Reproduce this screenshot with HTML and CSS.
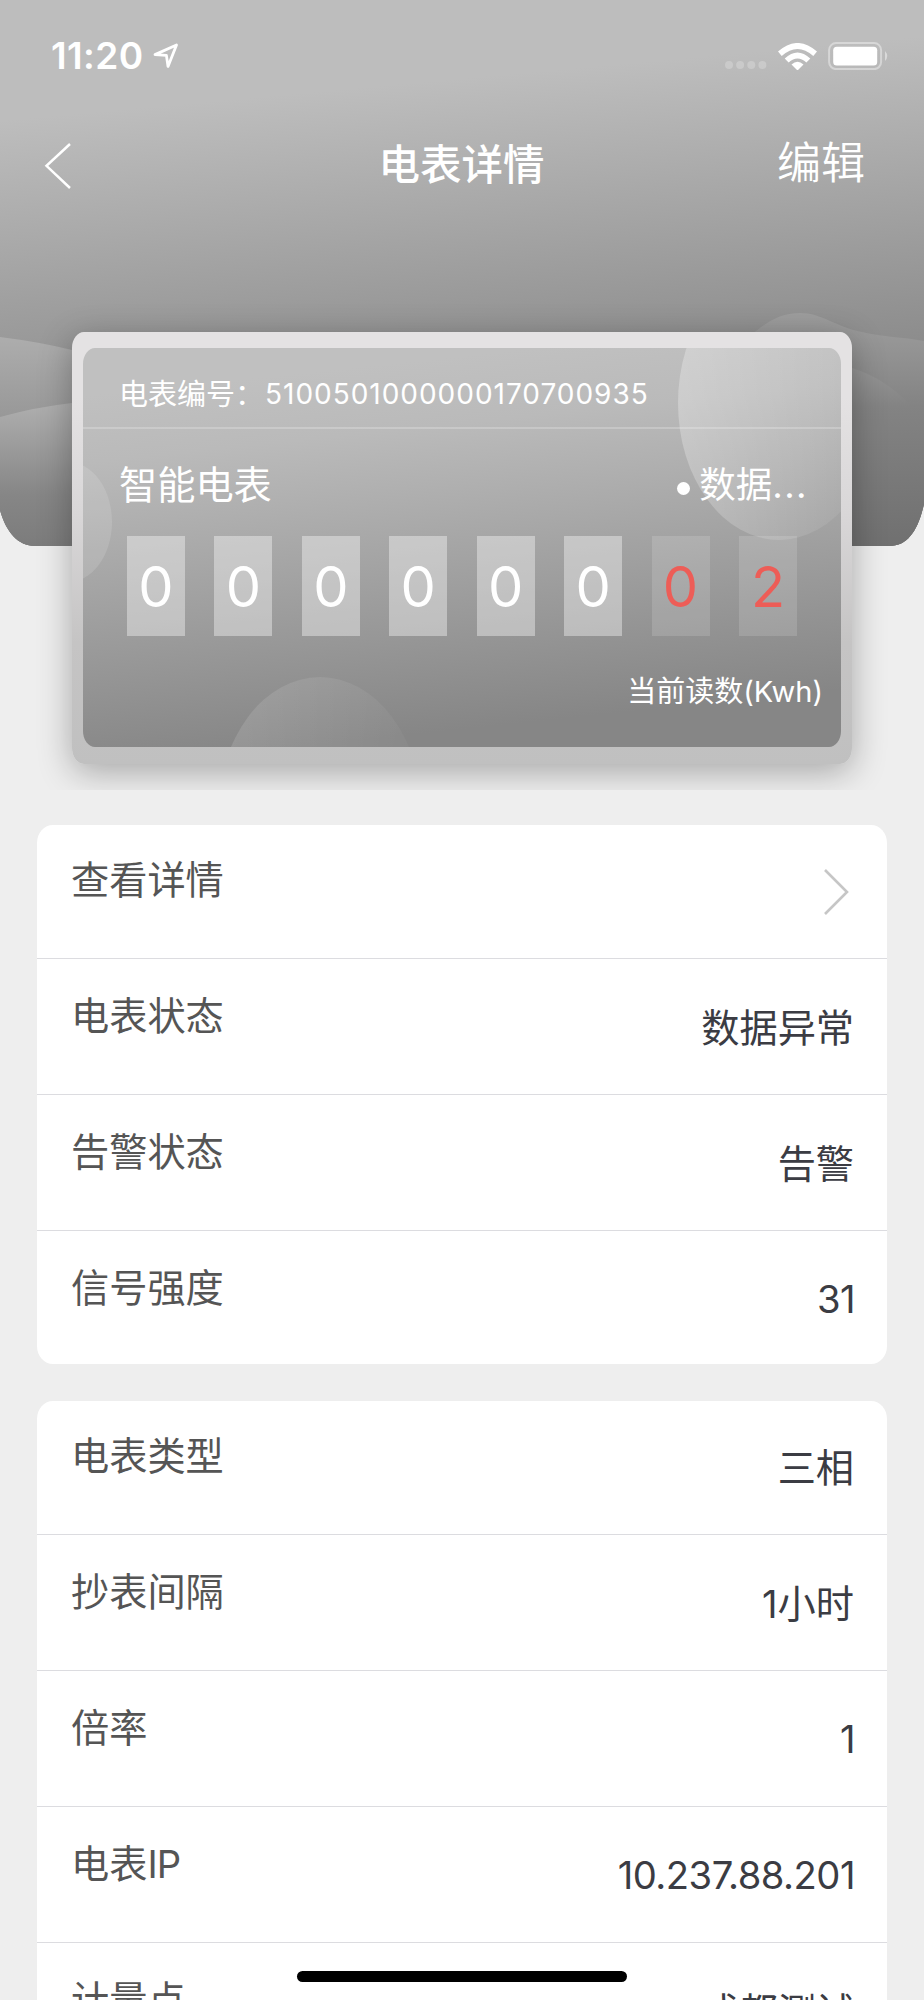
FILE: index.html
```html
<!DOCTYPE html>
<html lang="zh-CN">
<head>
<meta charset="utf-8">
<title>电表详情</title>
<link rel="stylesheet" href="styles.css">
</head>
<body>
<div class="screen">
  <svg class="backdrop" viewBox="0 0 924 546" aria-hidden="true">
    <defs>
      <linearGradient id="sky" gradientUnits="userSpaceOnUse" x1="445" y1="80" x2="488" y2="550">
        <stop offset="0" stop-color="#bdbdbd"/><stop offset=".5" stop-color="#979797"/><stop offset="1" stop-color="#727272"/>
      </linearGradient>
      <linearGradient id="hill1" x1="0" y1="0" x2="0" y2="1">
        <stop offset="0" stop-color="#adadad"/><stop offset=".4" stop-color="#979797"/><stop offset="1" stop-color="#7a7a7a"/>
      </linearGradient>
      <linearGradient id="hill2" x1="0" y1="0" x2="0" y2="1">
        <stop offset="0" stop-color="#b0b0b0"/><stop offset=".65" stop-color="#868686"/><stop offset="1" stop-color="#7c7c7c"/>
      </linearGradient>
      <linearGradient id="hill3" x1="0" y1="0" x2="0" y2="1">
        <stop offset="0" stop-color="#9e9e9e"/><stop offset=".4" stop-color="#838383"/><stop offset="1" stop-color="#707070"/>
      </linearGradient>
      <linearGradient id="hill4" x1="0" y1="0" x2="0" y2="1">
        <stop offset="0" stop-color="#969696"/><stop offset=".22" stop-color="#838383"/><stop offset="1" stop-color="#707070"/>
      </linearGradient>
      <clipPath id="sheet"><path d="M0 0H924V504C918 530 908 546 889 546H35C18 546 6 532 0 510Z"/></clipPath>
    </defs>
    <g clip-path="url(#sheet)">
      <path fill="url(#sky)" d="M0 0H924V546H0Z"/>
      <path fill="url(#hill1)" d="M0 337Q40 342 72 350L300 400V546H0Z"/>
      <path fill="url(#hill2)" d="M0 417Q36 407 72 403L300 400V546H0Z"/>
      <path fill="url(#hill3)" d="M700 380C750 340 765 313 800 313C822 313 836 327 862 332C884 337 902 337 924 341V546H700Z"/>
      <path fill="url(#hill4)" d="M700 400Q780 362 852 368Q884 378 908 403L924 420V546H700Z"/>
    </g>
  </svg>

  <header class="statusbar">
    <span class="time">11:20</span>
    <svg class="locate" viewBox="0 0 26 26"><path d="M2 11.6L23.5 2L15 23.4L13.4 12.4Z"/></svg>
    <div class="indicators">
      <svg class="dots" viewBox="0 0 42 8"><circle cx="4" cy="4" r="4"/><circle cx="15.1" cy="4" r="4"/><circle cx="26.3" cy="4" r="4"/><circle cx="37.4" cy="4" r="4"/></svg>
      <svg class="wifi" viewBox="0 0 39 27"><path d="M0 8.6Q19.500-8.700 39 8.600L35.300 13Q19.500-1 3.700 13Z"/><path d="M6.700 15.500Q19.500 3.500 32.300 15.500L28.400 19.500Q19.500 11.500 10.600 19.500Z"/><path d="M13.500 21.500Q19.500 16 25.500 21.500L19.500 27.500Z"/></svg>
      <svg class="battery" viewBox="0 0 60 28"><rect class="shell" x="1.100" y="1.100" width="52" height="26" rx="7"/><rect class="charge" x="5.200" y="4.800" width="44" height="18.600" rx="3.500"/><path class="nub" d="M57 9Q61.500 14 57 19Z"/></svg>
    </div>
  </header>

  <nav class="navbar">
    <svg class="back" viewBox="0 0 28 48"><path d="M26 2L2.500 23.800L26 46"/></svg>
    <h1 class="title">电表详情</h1>
    <span class="edit">编辑</span>
  </nav>

  <div class="stage">
    <section class="frame">
      <div class="meter">
        <svg class="bubbles" viewBox="0 0 758 399" aria-hidden="true">
          <defs>
            <linearGradient id="b1" x1="0" y1=".3" x2="1" y2=".5"><stop offset="0" stop-color="#fff" stop-opacity=".28"/><stop offset="1" stop-color="#fff" stop-opacity=".04"/></linearGradient>
            <linearGradient id="b2" x1="0" y1="0" x2="1" y2=".3"><stop offset="0" stop-color="#fff" stop-opacity=".14"/><stop offset="1" stop-color="#fff" stop-opacity=".02"/></linearGradient>
          </defs>
          <ellipse fill="url(#b1)" cx="696" cy="55" rx="101" ry="137"/>
          <ellipse fill="#fff" fill-opacity=".13" cx="-15" cy="174" rx="44" ry="60"/>
          <ellipse fill="url(#b2)" cx="237" cy="466" rx="102" ry="137"/>
        </svg>
        <div class="serial"><span>电表编号：</span><span class="serial-no">5100501000000170700935</span></div>
        <div class="kind"><span>智能电表</span><span class="state"><i class="bullet"></i>数据<span class="more">...</span></span></div>
        <div class="digits">
          <b>0</b><b>0</b><b>0</b><b>0</b><b>0</b><b>0</b><b class="frac">0</b><b class="frac">2</b>
        </div>
        <div class="caption">当前读数<span class="unit">(Kwh)</span></div>
      </div>
    </section>
  </div>

  <main class="lists">
    <ul class="list">
      <li><span class="label">查看详情</span><svg class="go" viewBox="0 0 26 48"><path d="M2 2L24 24L2 46"/></svg></li>
      <li><span class="label">电表状态</span><span class="value">数据异常</span></li>
      <li><span class="label">告警状态</span><span class="value">告警</span></li>
      <li><span class="label">信号强度</span><span class="value number">31</span></li>
    </ul>
    <ul class="list">
      <li><span class="label">电表类型</span><span class="value">三相</span></li>
      <li><span class="label">抄表间隔</span><span class="value">1小时</span></li>
      <li><span class="label">倍率</span><span class="value number">1</span></li>
      <li><span class="label">电表<span class="latin">IP</span></span><span class="value number">10.237.88.201</span></li>
      <li><span class="label">计量点</span><span class="value">成都测试</span></li>
    </ul>
  </main>
  <div class="home"></div>
</div>
</body>
</html>
```

FILE: styles.css
```css
* { box-sizing: border-box; }
body { margin: 0; background: #eeeeee; font-family: Inter, "Noto Sans CJK SC", sans-serif; }
svg { display: block; }
.screen { position: relative; width: 924px; height: 2000px; overflow: hidden; color: #fff; }
.backdrop { position: absolute; left: 0; top: 0; width: 924px; height: 546px; }
.statusbar, .navbar, .stage, .lists { position: relative; }

.statusbar { display: flex; height: 112px; padding: 0 36px 0 51px; align-items: center; }
.time { font-size: 37px; font-weight: 600; line-height: 40px; letter-spacing: .4px; }
.locate { width: 26px; height: 26px; margin-left: 9px; fill: none; stroke: #fff; stroke-width: 2.8; stroke-linejoin: round; }
.indicators { display: flex; margin-left: auto; align-items: center; }
.dots { width: 42px; height: 8px; margin-top: 17px; fill: rgba(255,255,255,.22); }
.wifi { width: 39px; height: 27px; margin-left: 11px; fill: #fff; }
.battery { width: 60px; height: 28px; margin-left: 11px; }
.shell { fill: none; stroke: rgba(255,255,255,.4); stroke-width: 2; }
.charge { fill: #fff; }
.nub { fill: rgba(255,255,255,.45); }

.navbar { display: flex; height: 102px; padding: 0 59px 0 44px; justify-content: space-between; align-items: center; }
.back { width: 28px; height: 48px; margin-right: 74px; margin-top: 6px; fill: none; stroke: #fff; stroke-width: 2.5; }
.title { margin: 3px 0 0; font-size: 41.5px; font-weight: 500; line-height: 56px; }
.edit { font-size: 44px; line-height: 56px; font-weight: 350; }

.stage { height: 576px; margin: 0 35px; padding: 118px 37px 0; overflow: hidden; }
.frame { height: 432px; padding: 16px 11px 17px; border-radius: 12px / 16px; background: linear-gradient(#e4e2e3 15%, #d9d7d8 42%, #c5c4c4 72%, #c0c0c0); box-shadow: 0 8px 34px rgba(0,0,0,.3); }
.meter { position: relative; height: 399px; overflow: hidden; border-radius: 12px / 16px; background: linear-gradient(174deg, #c0c0c0 10%, #bababa 24%, #868686 88%); }
.bubbles { position: absolute; left: 0; top: 0; width: 758px; height: 399px; }
.serial, .kind, .digits, .caption { position: relative; }
.serial { display: flex; height: 81px; padding: 14px 36px 0; align-items: center; font-size: 29px; line-height: 40px; border-bottom: 2px solid rgba(255,255,255,.22); }
.serial-no { margin: -1px 0 0 1px; font-size: 28px; letter-spacing: .98px; }
.kind { display: flex; height: 107px; padding: 4px 33px 0 36px; justify-content: space-between; align-items: center; font-size: 38.2px; line-height: 50px; }
.state { display: flex; align-items: center; font-size: 36.5px; }
.bullet { width: 13px; height: 13px; margin: 8px 9px 0 0; border-radius: 50%; background: #fff; }
.more { letter-spacing: 1.4px; }
.digits { display: flex; padding: 0 44px; justify-content: space-between; }
.digits b { width: 58px; height: 100px; background: rgba(255,255,255,.38); font-size: 56px; line-height: 103px; font-weight: 400; text-align: center; }
.digits .frac { background: rgba(255,255,255,.14); color: #ed5d57; }
.caption { margin-top: 36px; padding-right: 18px; font-size: 29px; line-height: 40px; text-align: right; }

.lists { display: flex; flex-direction: column; gap: 37px; padding: 35px 37px 0; }
.list { margin: 0; padding: 0; border-radius: 16px / 18px; background: #fff; list-style: none; }
.list li { display: flex; height: 136px; padding: 32px 34px 0; justify-content: space-between; border-bottom: 1px solid #dcdce0; }
.list li:first-child { height: 134px; padding-top: 30px; }
.list li:last-child { height: 133px; border: 0; }
.label, .value { font-size: 38.2px; line-height: 50px; }
.label { color: #555; }
.latin { letter-spacing: -.8px; }
.value { margin: 12px -1px 0 0; color: #3b3c43; }
.number { margin: 11px -2px 0 0; letter-spacing: -.5px; }
.go { width: 26px; height: 48px; margin: 13px 4px 0; fill: none; stroke: #c6c6c6; stroke-width: 2.6; }
.home { position: absolute; left: 297px; top: 1971px; width: 330px; height: 11px; border-radius: 6px; background: #000; }
```
